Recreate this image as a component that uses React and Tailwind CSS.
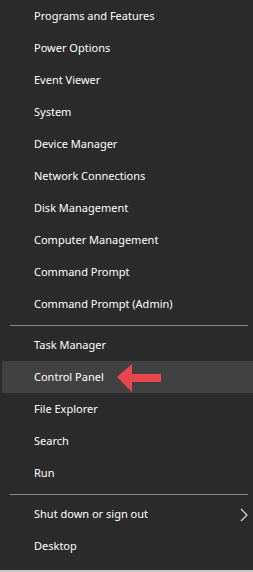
import React from 'react';

const groupA = [
  'Programs and Features',
  'Power Options',
  'Event Viewer',
  'System',
  'Device Manager',
  'Network Connections',
  'Disk Management',
  'Computer Management',
  'Command Prompt',
  'Command Prompt (Admin)',
];

const groupB = ['Task Manager', 'Control Panel', 'File Explorer', 'Search', 'Run'];

const Item = ({ label, active, children }) => (
  <div
    className={`relative flex h-8 items-center pl-[34px] pt-px ${active ? 'ml-[2px] bg-[#414141]' : ''}`}
  >
    <span className={active ? '-ml-[2px]' : ''}>{label}</span>
    {children}
  </div>
);

const Separator = () => (
  <div className="h-[9px] pt-[5px] pl-[10px] pr-[5px]">
    <div className="h-px bg-[#8a8a8a]" />
  </div>
);

const App = () => {
  return (
    <div
      className="w-[253px] h-[572px] bg-[#2b2b2b] text-white text-[11px] flex flex-col"
      style={{ fontFamily: '"Noto Sans", "Open Sans", sans-serif' }}
    >
      {groupA.map((l) => (
        <Item key={l} label={l} />
      ))}
      <Separator />
      {groupB.map((l) => (
        <Item key={l} label={l} active={l === 'Control Panel'}>
          {l === 'Control Panel' && (
            <svg className="absolute left-[113px] top-[3px]" width="48" height="30" viewBox="0 0 48 30">
              <polygon points="2,13 17,0 17,10 46,10 46,18 17,18 17,28" fill="#e8474c" />
            </svg>
          )}
        </Item>
      ))}
      <Separator />
      <Item label="Shut down or sign out">
        <svg className="absolute left-[239px] top-[10px]" width="10" height="14" viewBox="0 0 10 14">
          <polyline points="2,1 8,7 2,13" fill="none" stroke="#d8d8d8" strokeWidth="1.2" />
        </svg>
      </Item>
      <Item label="Desktop" />
      <div className="flex-1" />
      <div className="h-[2px] bg-[#c8c8c8]" />
    </div>
  );
};

export default App;
